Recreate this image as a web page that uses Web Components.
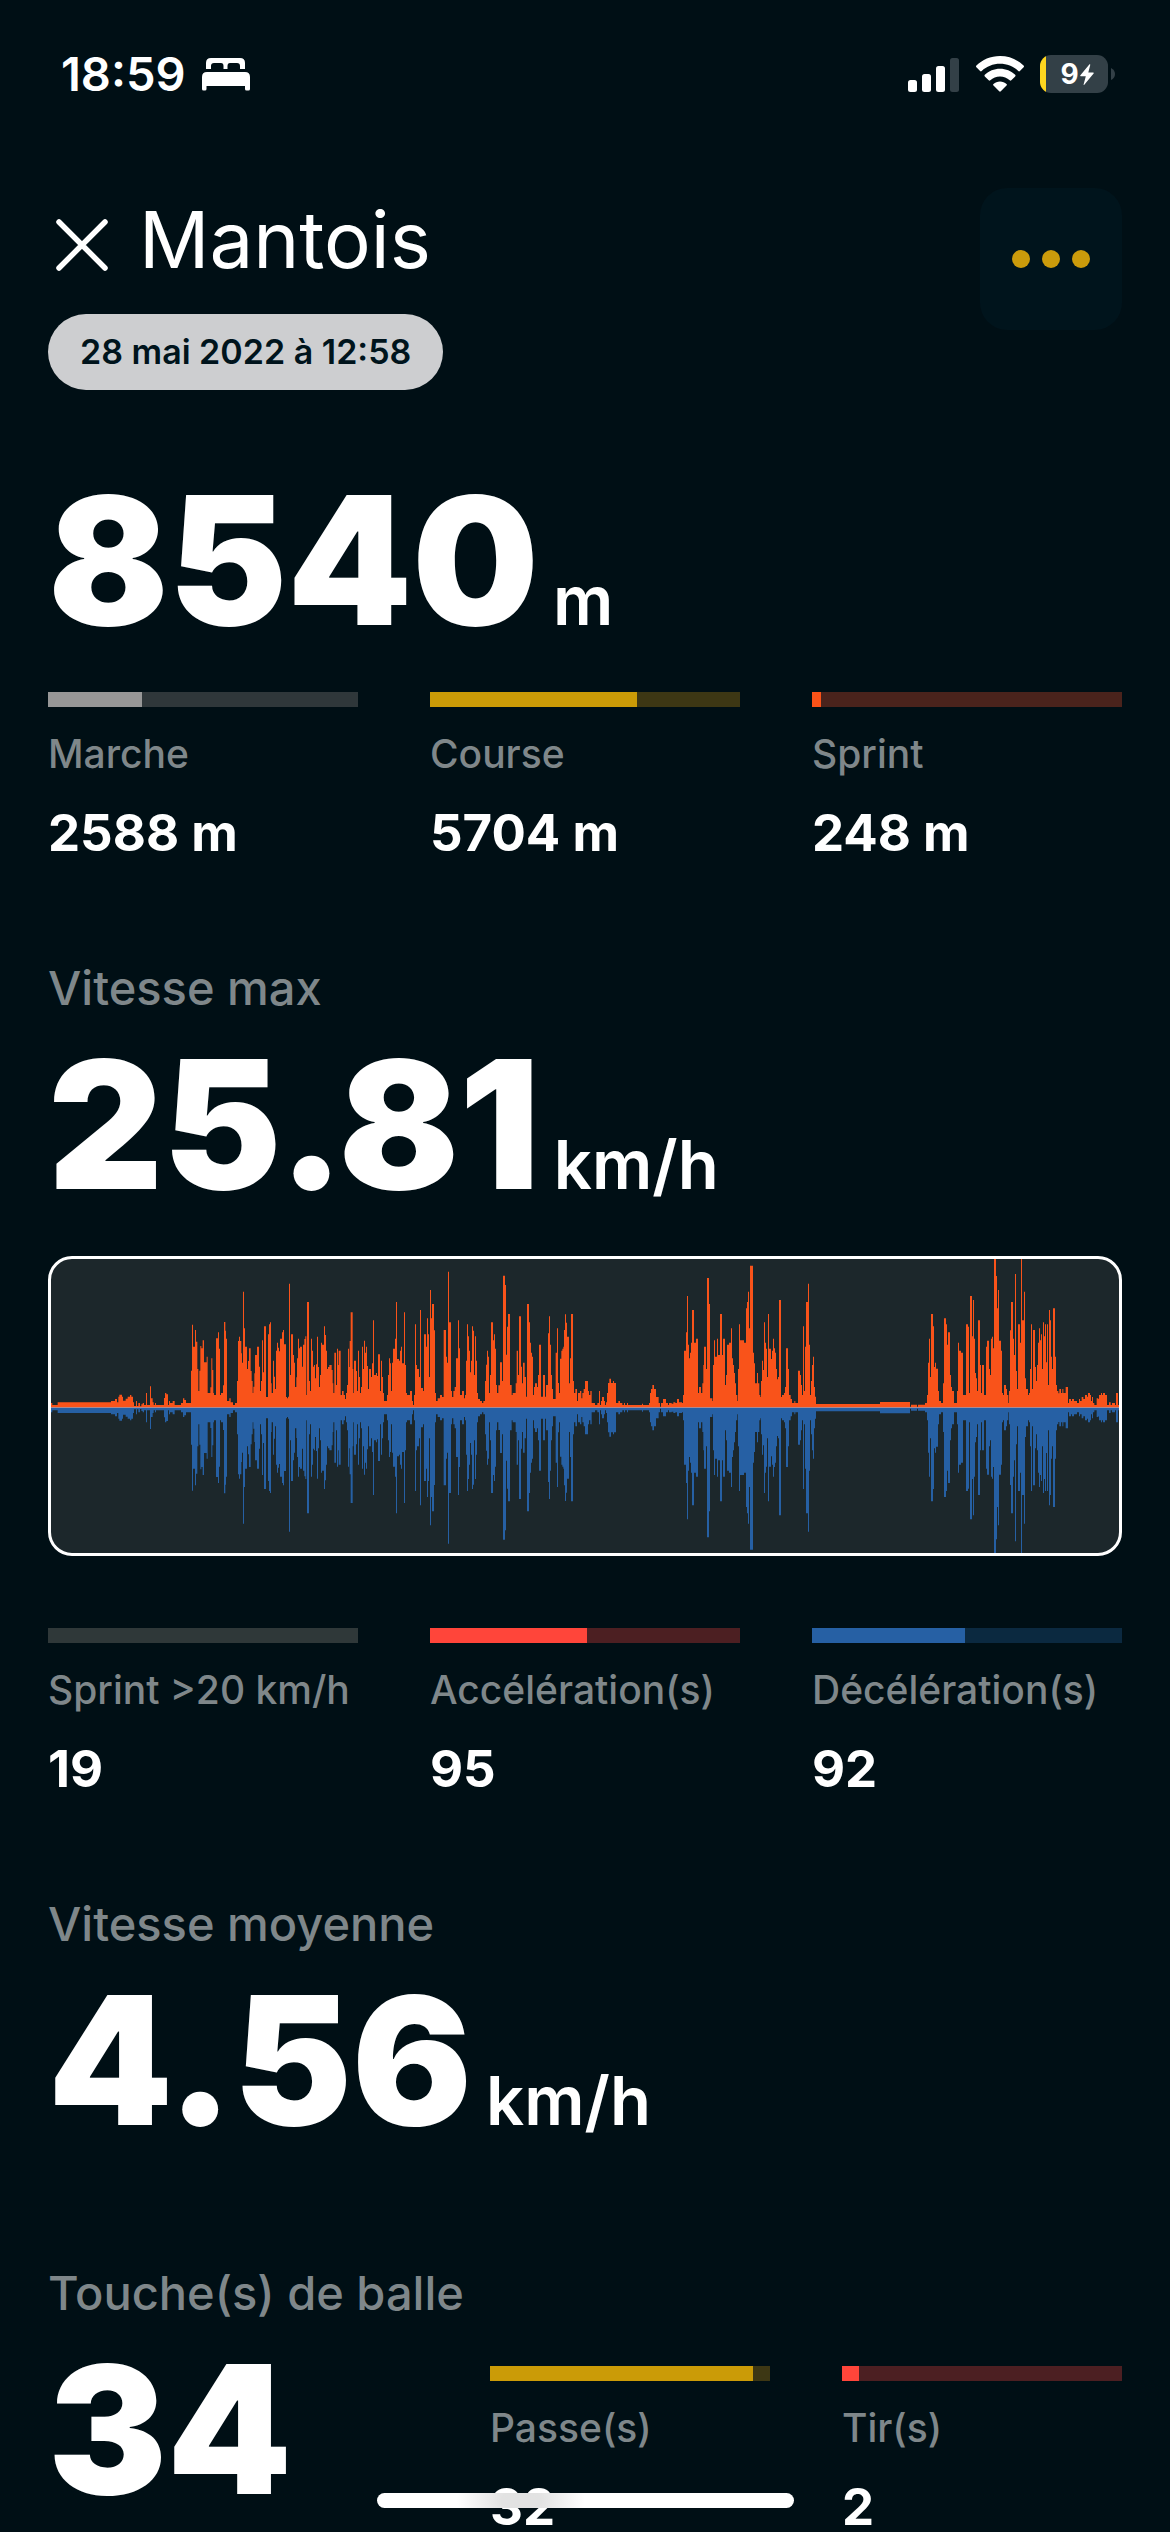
<!DOCTYPE html>
<html lang="fr">
<head>
<meta charset="utf-8">
<meta name="viewport" content="width=device-width, initial-scale=1">
<title>Mantois</title>
<style>
  html { scrollbar-width: none; background: #000f15; }
  body {
    margin: 0;
    background: #000f15;
    color: #fff;
    font-family: Inter, "Liberation Sans", sans-serif;
    --muted: #7f878a;
    --gutter: 48px;
  }
</style>
</head>
<body>
<session-screen></session-screen>

<script>
function define(name, html, setup) {
  const template = document.createElement('template');
  template.innerHTML = html;
  customElements.define(name, class extends HTMLElement {
    constructor() {
      super();
      this.attachShadow({ mode: 'open' }).append(template.content.cloneNode(true));
    }
    connectedCallback() {
      if (setup) setup(this, this.shadowRoot);
    }
  });
}

define('status-bar', `
  <style>
    :host { display: flex; align-items: center; justify-content: space-between; height: 48px; padding: 50px 55px 0 61px; }
    .side { display: flex; align-items: center; gap: 16px; }
    time { font-size: 47px; font-weight: 600; line-height: 48px; }
    .battery { display: flex; align-items: center; gap: 3px; }
    .cell { display: flex; align-items: center; justify-content: center; gap: 1px; box-sizing: border-box; width: 68px; height: 38px; padding-left: 6px; border-radius: 11px; background: linear-gradient(90deg, #ffd61f 6px, #334047 6px); font-size: 28px; font-weight: 700; line-height: 38px; }
    svg { display: block; }
  </style>
  <div class="side">
    <time>18:59</time>
    <svg width="48" height="34" viewBox="0 0 48 34" fill="#fff" aria-label="Sommeil">
      <path d="M4 12V6q0-5 5-5h29q5 0 5 5v6h-5V9q0-3-3-3h-7q-2.500 0-2.500 3v3h-4V9q0-3-2.500-3h-7q-3 0-3 3v3z"/>
      <path d="M0 20q0-5 5-5h38q5 0 5 5v12q0 1.500-1.500 1.500h-2q-1.500 0-1.500-1.500v-3H4.500v3q0 1.500-1.500 1.500H1.500Q0 33.500 0 32z"/>
    </svg>
  </div>
  <div class="side">
    <svg width="52" height="36" viewBox="0 0 52 36" fill="#fff" aria-label="Réseau">
      <rect x="0" y="24" width="9" height="12" rx="2.500"/>
      <rect x="14" y="18" width="9" height="18" rx="2.500"/>
      <rect x="28" y="10" width="9" height="26" rx="2.500"/>
      <rect x="42" y="2" width="9" height="34" rx="2.500" fill="#334047"/>
    </svg>
    <svg width="48" height="36" viewBox="0 0 48 36" fill="#fff" aria-label="Wi-Fi">
      <path d="M24 0C14.600 0 6.200 3.800 0.400 9.600q-.8.800 0 1.600l3.700 3.800q.8.800 1.600 0C10.500 10.400 17 7.800 24 7.800s13.500 2.600 18.300 7.200q.8.800 1.600 0l3.700-3.800q.8-.8 0-1.600C41.800 3.800 33.400 0 24 0z"/>
      <path d="M24 12.800c-5.900 0-11.200 2.300-15.200 6q-.8.800 0 1.600l3.900 3.900q.8.700 1.600 0c2.600-2.300 6-3.700 9.700-3.700s7.100 1.400 9.700 3.700q.8.700 1.600 0l3.900-3.900q.8-.8 0-1.600c-4-3.700-9.300-6-15.200-6z"/>
      <path d="M24 25.400c-2.500 0-4.800.9-6.500 2.500q-.8.700 0 1.500l5.700 5.900q.8.800 1.600 0l5.700-5.900q.8-.8 0-1.500c-1.700-1.600-4-2.500-6.500-2.500z"/>
    </svg>
    <div class="battery">
      <div class="cell"><span>9</span>
        <svg width="14" height="21" viewBox="0 0 14 21" fill="#fff" aria-hidden="true"><path d="M9.500.3L.4 11.200q-.6.900.4 1h5L3.600 20.400q-.1.900.7.300L13.600 9.500q.5-.9-.4-1H8.300L10.300.8q.1-.9-.8-.5z"/></svg>
      </div>
      <svg width="4" height="12" viewBox="0 0 4 12" fill="#334047" aria-hidden="true"><path d="M0 0q4 2 4 6t-4 6z"/></svg>
    </div>
  </div>
`);

define('session-header', `
  <style>
    :host { display: flex; align-items: flex-start; justify-content: space-between; padding: 90px var(--gutter) 0; }
    .identity { display: flex; flex-direction: column; align-items: flex-start; padding-top: 22px; gap: 44px; }
    .title { display: flex; align-items: center; gap: 31px; height: 60px; }
    h1 { margin: 0; font-size: 78px; font-weight: 400; line-height: 60px; }
    button { border: 0; margin: 0; background: none; color: inherit; display: flex; align-items: center; justify-content: center; }
    .close { padding: 10px 0 0 8px; }
    .menu { width: 142px; height: 142px; border-radius: 27px; background: #00141c; padding: 0; }
    svg { display: block; }
  </style>
  <div class="identity">
    <div class="title">
      <button class="close" type="button" aria-label="Fermer">
        <svg width="52" height="52" viewBox="0 0 52 52" stroke="#fff" stroke-width="5.500" stroke-linecap="round"><path d="M3 3l46 46M49 3L3 49"/></svg>
      </button>
      <h1><slot></slot></h1>
    </div>
    <slot name="date"></slot>
  </div>
  <button class="menu" type="button" aria-label="Options">
    <svg width="80" height="18" viewBox="0 0 80 18" fill="#cb9b0b"><circle cx="10" cy="9" r="9"/><circle cx="40" cy="9" r="9"/><circle cx="70" cy="9" r="9"/></svg>
  </button>
`);

define('date-pill', `
  <style>
    :host { display: block; padding: 0 32px; border-radius: 38px; background: #cdced0; color: #00141c; font-size: 34px; font-weight: 600; line-height: 76px; }
  </style>
  <slot></slot>
`);

define('metric-section', `
  <style>
    :host { display: block; padding: 0 var(--gutter); }
    h2 { margin: 0 0 56px; color: var(--muted); font-size: 47px; font-weight: 500; line-height: 34px; }
    h2[hidden] { display: none; }
  </style>
  <h2></h2>
  <slot></slot>
`, (host, root) => {
  const heading = root.querySelector('h2');
  heading.textContent = host.getAttribute('heading') || '';
  heading.hidden = !host.hasAttribute('heading');
});

define('big-number', `
  <style>
    :host { display: flex; align-items: baseline; gap: 14px; font-size: 178px; font-weight: 900; line-height: 128px; }
    small { font-size: 67px; font-weight: 600; line-height: 48px; }
    small:empty { display: none; }
  </style>
  <span><slot></slot></span><small></small>
`, (host, root) => {
  root.querySelector('small').textContent = host.getAttribute('unit') || '';
});

define('stat-row', `
  <style>
    :host { display: grid; grid-auto-flow: column; grid-auto-columns: minmax(0, 1fr); column-gap: 72px; }
  </style>
  <slot></slot>
`);

define('stat-item', `
  <style>
    :host { display: block; white-space: nowrap; }
    .track { height: 15px; background: var(--track); }
    .fill { height: 100%; background: var(--fill); }
    .label { margin-top: 33px; color: var(--muted); font-size: 39px; font-weight: 500; line-height: 28px; }
    .value { margin-top: 47px; font-size: 51px; font-weight: 700; line-height: 36px; }
  </style>
  <div class="track" role="meter" aria-labelledby="label" aria-valuemin="0" aria-valuemax="100"><div class="fill"></div></div>
  <div class="label" id="label"></div>
  <div class="value"><slot></slot></div>
`, (host, root) => {
  const share = host.getAttribute('share') || '0';
  root.querySelector('.fill').style.width = share + '%';
  root.querySelector('.track').setAttribute('aria-valuenow', share);
  root.querySelector('.label').textContent = host.getAttribute('label');
});

/* Speed trace: each block holds "x,y" steps, y counted down from the plot's top to the axis at 501. */
const TRACE = [
  [-33, `33,489 37,495 53,487 213,483 225,477 231,487 235,470 238,464 246,470 249,482 257,476 263,470 270,465 274,470 279,487 282,498 288,483 291,498 295,489 300,499 304,493 308,489 312,495 318,459 321,495 330,439 333,475 338,487 341,495 345,489 348,495 372,474 375,459 379,463 384,495 387,483 390,489 398,483 404,495 423,489 429,475 433,480 438,489 453,392 456,254 459,320 465,270 468,305 472,387 475,453 478,392 481,318 484,325 488,301 492,367 500,350 503,459 511,442 514,355 517,390 520,459 522,465 528,295 534,277 537,326 540,465 543,459 549,436 552,246 556,272 558,296 561,483 568,475 572,487 579,495 585,489 591,423 594,303 597,290 600,303 604,340 606,368 609,155 612,265 615,320 621,387 624,363 627,325 632,393 635,423 638,459 640,440 643,400 645,345 651,320 657,380 660,453 663,423 666,301 669,397 672,259 678,471 684,283 687,253 690,247 693,430 695,459 699,362 702,410 705,447 708,332 711,308 714,323 717,334 720,296 726,277 729,270 732,313 738,471 741,475 744,470 747,131 750,405 753,283 759,345 762,368 765,441 769,412 771,355 774,296 777,325 780,320 786,380 789,314 793,297 796,289 799,465 801,186 807,423 810,453 813,296 816,332 819,380 822,375 825,415 828,373 831,290 834,381 837,441 840,405 843,308 846,314 852,259 855,285 858,332 861,387 864,381 868,375 875,390 878,430 880,459 883,338 888,435 891,326 894,375 896,332 902,465 906,453 911,465 915,477 918,459 921,435 924,326 927,381 929,303 932,217 938,387 940,459 942,362 948,393 951,453 954,332 957,411 960,459 963,441 966,320 969,387 972,302 975,338 978,320 981,378 984,447 987,387 993,411 996,370 999,241 1002,405 1008,399 1011,408 1014,343 1020,453 1023,362 1026,411 1029,459 1032,483 1041,465 1044,405 1047,355 1050,370 1053,453 1056,368 1059,326 1065,296 1068,186 1071,357 1077,362`],
  [1047, `0,332 3,320 6,370 12,217 15,375 18,459 21,465 30,453 36,483 39,495 42,465 45,253 48,375 51,387 57,411 60,210 63,444 69,453 72,283 78,320 81,235 84,283 87,411 90,150 93,235 96,192 102,271 105,459 108,483 113,475 120,465 126,471 131,270 138,350 141,368 144,95 147,247 153,453 156,471 160,453 164,441 168,355 174,241 177,325 180,465 186,453 192,475 195,465 198,362 201,253 204,289 207,332 210,397 213,362 216,259 219,272 222,405 225,289 228,362 231,459 234,477 240,483 246,489 250,483 255,423 258,374 261,332 264,350 267,459 270,405 273,247 279,301 282,283 285,326 288,435 291,459 295,436 300,367 306,423 309,107 315,135 318,344 321,260 324,222 330,435 335,465 338,459 347,430 350,332 354,405 357,229 363,380 366,430 369,368 374,411 378,470 381,192 387,247 390,308 393,338 396,350 399,465 402,441 405,430 411,441 414,405 417,314 423,470 429,405 435,470 438,435 444,280 447,229 450,314 453,405 456,447 459,477 467,338 471,265 474,429 477,459 480,356 484,332 487,326 490,320 492,270 495,223 498,248 501,290 507,430 510,355 513,222 519,423 522,459 526,447 531,483 534,459 540,453 544,475 547,459 551,447 555,423 564,453 567,465 571,453 575,489 585,495 592,489 597,453 600,495 603,483 606,471 612,483 615,495 618,487 621,459 624,429 628,416 633,429 639,423 642,429 648,489 655,483 660,489 667,495 672,489 675,495 681,489 684,495 726,491 729,495 747,489 750,459 753,447 757,435 762,447 768,471 776,489 780,500 783,489 789,477 798,489 804,495 807,489 815,491 820,487 826,489 831,477 837,487 846,489 849,465 852,332 858,277 861,168 864,314 867,355 870,338 873,308 876,210 882,308 888,296 894,459 897,441 900,441 903,459 907,430 910,375 912,320 918,387 921,114 927,192 930,475 937,483 939,375 942,301 945,350 951,296 954,345 960,222 966,345 969,296 975,435 978,405 981,314 987,308 993,265 996,355 999,375 1002,399 1005,430 1008,465 1012,483 1014,387 1017,253 1020,301 1032,308 1038,205 1041,186 1044,155 1047,265 1050,77 1059,338 1062,370 1065,430 1071,399 1074,430 1078,465 1081,471 1083,423 1086,362 1089,390 1092,247 1095,308 1098,326 1101,411 1104,222 1107,326`],
  [2157, `0,326 3,357 6,332 9,296 12,325 15,338 18,387 21,418 24,411 27,180 33,471 36,465 42,459 45,441 48,325 54,387 57,465 62,477 66,489 73,483 76,489 84,392 90,405 93,435 96,465 99,259 102,453 105,320 108,186 114,131 117,314 120,465 123,423 126,375 129,350 132,441 135,470 138,492 330,486 420,500 423,494 441,500 444,494 465,489 471,465 474,368 477,296 480,411 483,222 489,259 492,381 495,368 498,386 504,453 507,483 513,489 519,430 522,235 528,253 531,314 534,277 540,405 543,441 546,453 552,489 561,453 564,308 567,332 573,338 579,465 588,253 594,260 597,459 600,168 606,289 609,180 612,296 615,399 618,415 621,453 624,241 630,375 633,459 636,375 642,465 648,320 651,302 657,387 660,405 663,296 666,290 669,325 672,57 678,108 681,205 684,150 687,302 693,332 696,459 699,465 702,435 708,447 711,465 715,489 717,453 720,271 723,186 729,296 732,345 735,102 738,393 741,447 744,253 750,308 753,57 756,241 762,155 765,415 768,447 774,465 777,459 780,387 783,253 786,447 789,270 795,381 798,423 801,375 804,308 807,265 810,301 813,283 816,387 819,247 822,289 825,253 828,367 831,253 834,435 837,210 840,241 843,350 846,387 849,205 855,350 858,435 861,453 865,460 868,447 873,459 877,447 880,459 883,459 887,441 894,489 897,477 903,483 906,477 912,483 921,489 927,477 930,483 935,471 940,477 945,465 951,470 954,459 960,465 963,483 966,471 969,489 973,495 980,475 985,477 987,465 993,459 996,465 999,459 1005,465 1011,495 1017,487 1022,495 1026,489 1035,495 1038,459 1044,495`]
];

define('speed-chart', `
  <style>
    :host { display: block; box-sizing: border-box; height: 300px; border: 3px solid #fff; border-radius: 24px; background: #1c272b; overflow: hidden; }
    svg { display: block; width: 100%; height: 100%; }
  </style>
  <svg viewBox="0 0 3204 882" preserveAspectRatio="none" role="img" aria-label="Accélérations et décélérations">
    <path class="up" fill="#f9531a"/>
    <path class="down" fill="#2660a4"/>
    <rect y="444" width="3204" height="3" fill="#a98a92"/>
  </svg>
`, (host, root) => {
  const axis = 446;
  let up = `M0 ${axis}`;
  let down = `M0 ${axis}`;
  for (const [shift, steps] of TRACE) {
    for (const step of steps.split(' ')) {
      const [x, y] = step.split(',').map(Number);
      const rise = 503 - y;
      up += `H${x + shift}V${axis - rise}`;
      down += `H${x + shift}V${axis + rise}`;
    }
  }
  root.querySelector('.up').setAttribute('d', `${up}H3204V${axis}Z`);
  root.querySelector('.down').setAttribute('d', `${down}H3204V${axis}Z`);
});

define('home-indicator', `
  <style>
    :host { position: fixed; left: 50%; bottom: 24px; width: 417px; height: 15px; margin-left: -208px; border-radius: 8px; background: radial-gradient(ellipse 64px 40px at 144px 50%, #e2e2e2 30%, #fff); }
  </style>
`);

define('session-screen', `
  <style>
    :host { display: block; }
    main { display: flex; flex-direction: column; }
    .distance { margin-top: 107px; }
    .block { margin-top: 120px; }
    .touches { margin-top: 151px; }
    .below { margin-top: 67px; }
    .after-chart { margin-top: 72px; }
    .split { display: grid; grid-template-columns: 442fr 632fr; }
    .walk { --fill: #979797; --track: #2f373a; }
    .run { --fill: #cb9b07; --track: #3d3714; }
    .sprint { --fill: #fa5218; --track: #4a231c; }
    .fast { --fill: #979797; --track: #2f3839; }
    .accel { --fill: #ff453a; --track: #4c1f22; }
    .decel { --fill: #2660a4; --track: #0b2940; }
  </style>
  <status-bar></status-bar>
  <main>
    <session-header>Mantois<date-pill slot="date">28 mai 2022 à 12:58</date-pill></session-header>

    <metric-section class="distance">
      <big-number unit="m">8540</big-number>
      <stat-row class="below">
        <stat-item class="walk" label="Marche" share="30.3">2588 m</stat-item>
        <stat-item class="run" label="Course" share="66.8">5704 m</stat-item>
        <stat-item class="sprint" label="Sprint" share="2.9">248 m</stat-item>
      </stat-row>
    </metric-section>

    <metric-section class="block" heading="Vitesse max">
      <big-number unit="km/h">25.81</big-number>
      <speed-chart class="below"></speed-chart>
      <stat-row class="after-chart">
        <stat-item class="fast" label="Sprint &gt;20 km/h" share="0">19</stat-item>
        <stat-item class="accel" label="Accélération(s)" share="50.8">95</stat-item>
        <stat-item class="decel" label="Décélération(s)" share="49.2">92</stat-item>
      </stat-row>
    </metric-section>

    <metric-section class="block" heading="Vitesse moyenne">
      <big-number unit="km/h">4.56</big-number>
    </metric-section>

    <metric-section class="touches" heading="Touche(s) de balle">
      <div class="split">
        <big-number>34</big-number>
        <stat-row>
          <stat-item class="run" label="Passe(s)" share="94.1">32</stat-item>
          <stat-item class="accel" label="Tir(s)" share="5.9">2</stat-item>
        </stat-row>
      </div>
    </metric-section>
  </main>
  <home-indicator></home-indicator>
`);
</script>
</body>
</html>
